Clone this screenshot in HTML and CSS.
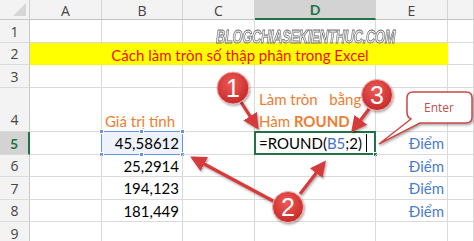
FILE: index.html
```html
<!DOCTYPE html>
<html lang="vi">
<head>
  <meta charset="UTF-8" />
  <title>Làm tròn số thập phân trong Excel</title>
  <link rel="stylesheet" href="styles.css">
</head>
<body>
  <div class="sheet">
    <div class="grid">
      <!-- header row -->
      <div class="corner"><span class="tri"></span></div>
      <div class="col-head">A</div>
      <div class="col-head">B</div>
      <div class="col-head">C</div>
      <div class="col-head active">D</div>
      <div class="col-head">E</div>
      <div class="col-head"></div>

      <!-- row 1 -->
      <div class="row-head">1</div>
      <div class="cell"></div><div class="cell"></div><div class="cell"></div><div class="cell"></div><div class="cell"></div><div class="cell"></div>

      <!-- row 2 -->
      <div class="row-head">2</div>
      <div class="cell title"><span>Cách làm tròn số thập phân trong Excel</span></div>
      <div class="cell"></div>

      <!-- row 3 -->
      <div class="row-head">3</div>
      <div class="cell"></div><div class="cell"></div><div class="cell"></div><div class="cell"></div><div class="cell"></div><div class="cell"></div>

      <!-- row 4 -->
      <div class="row-head tall">4</div>
      <div class="cell"></div>
      <div class="cell label">Giá trị tính</div>
      <div class="cell"></div>
      <div class="cell note">
        <span>Làm tròn&nbsp;&nbsp; bằng</span>
        <span>Hàm <b>ROUND</b></span>
      </div>
      <div class="cell"></div><div class="cell"></div>

      <!-- row 5 -->
      <div class="row-head active">5</div>
      <div class="cell"></div>
      <div class="cell num selected">45,58612
        <i class="h tl"></i><i class="h tr"></i><i class="h bl"></i><i class="h br"></i>
        <i class="h tm"></i><i class="h bm"></i>
      </div>
      <div class="cell"></div>
      <div class="cell editing">=ROUND(<span class="ref">B5</span>;2)<span class="caret"></span><i class="fill"></i></div>
      <div class="cell word">Điểm</div>
      <div class="cell"></div>

      <!-- row 6 -->
      <div class="row-head">6</div>
      <div class="cell"></div>
      <div class="cell num">25,2914</div>
      <div class="cell"></div><div class="cell"></div>
      <div class="cell word">Điểm</div>
      <div class="cell"></div>

      <!-- row 7 -->
      <div class="row-head">7</div>
      <div class="cell"></div>
      <div class="cell num">194,123</div>
      <div class="cell"></div><div class="cell"></div>
      <div class="cell word">Điểm</div>
      <div class="cell"></div>

      <!-- row 8 -->
      <div class="row-head">8</div>
      <div class="cell"></div>
      <div class="cell num">181,449</div>
      <div class="cell"></div><div class="cell"></div>
      <div class="cell word">Điểm</div>
      <div class="cell"></div>

      <!-- row 9 -->
      <div class="row-head">9</div>
      <div class="cell"></div><div class="cell"></div><div class="cell"></div><div class="cell"></div><div class="cell"></div><div class="cell"></div>
    </div>

    <div class="watermark">BLOGCHIASEKIENTHUC.COM</div>

    <svg class="marks" width="474" height="241" viewBox="0 0 474 241">
      <defs>
        <marker id="head" markerWidth="5" markerHeight="5" refX="4" refY="2.5" orient="auto" markerUnits="strokeWidth">
          <path d="M0,0 L5,2.5 L0,5 Z" fill="#d63a3a"/>
        </marker>
        <radialGradient id="ball" cx="45%" cy="35%" r="65%">
          <stop offset="0" stop-color="#ef5a55"/>
          <stop offset="1" stop-color="#c52a2a"/>
        </radialGradient>
        <filter id="shadow" x="-20%" y="-20%" width="150%" height="150%">
          <feDropShadow dx="1" dy="1.5" stdDeviation="1.2" flood-color="#000" flood-opacity="0.35"/>
        </filter>
      </defs>

      <g stroke="#d63a3a" stroke-width="3.2" fill="none" marker-end="url(#head)" filter="url(#shadow)">
        <line x1="241" y1="102" x2="257" y2="127"/>
        <line x1="369" y1="109" x2="353" y2="130"/>
        <line x1="275" y1="202" x2="193" y2="158"/>
        <line x1="300" y1="194" x2="324" y2="163"/>
      </g>

      <g filter="url(#shadow)">
        <path d="M413,92 H466 Q472,92 472,98 V117 Q472,123 466,123 H420 L379,144 L411,119 Q407,117 407,112 V98 Q407,92 413,92 Z" fill="#fff" stroke="#c94a48" stroke-width="1.5"/>
      </g>
      <text x="439" y="112" class="enter">Enter</text>

      <g filter="url(#shadow)">
        <circle cx="233" cy="88" r="16" fill="url(#ball)" stroke="#f1b0ae" stroke-width="1"/>
        <circle cx="377" cy="95" r="15.5" fill="url(#ball)" stroke="#f1b0ae" stroke-width="1"/>
        <circle cx="288" cy="207" r="15.5" fill="url(#ball)" stroke="#f1b0ae" stroke-width="1"/>
      </g>
      <text x="233" y="97" class="digit">1</text>
      <text x="377" y="104" class="digit">3</text>
      <text x="288" y="216" class="digit">2</text>
    </svg>
  </div>
</body>
</html>
```

FILE: styles.css
```css
* { margin: 0; padding: 0; box-sizing: border-box; }
body {
  font-family: Lato, 'Open Sans', sans-serif;
  background-color: #fff;
  color: #000;
  width: 474px;
  height: 241px;
  overflow: hidden;
}
.sheet {
  position: relative;
  width: 474px;
  height: 241px;
  overflow: hidden;
}
.grid {
  display: grid;
  grid-template-columns: 30px 72px 81px 72px 121px 72px 26px;
  grid-template-rows: 20px 23px 22px 23px 44px 23px 22px 23px 22px 23px;
}
.corner {
  background-color: #f3f3f3;
  border-right: 1px solid #d0d0d0;
  border-bottom: 1px solid #c8c8c8;
  position: relative;
}
.tri {
  position: absolute;
  right: 3px;
  bottom: 3px;
  width: 0;
  height: 0;
  border-left: 13px solid transparent;
  border-bottom: 13px solid #d6d6d6;
}
.col-head {
  background-color: #f3f3f3;
  border-right: 1px solid #d4d4d4;
  border-bottom: 1px solid #c0c0c0;
  display: flex;
  align-items: center;
  justify-content: center;
  font-size: 14px;
  color: #444;
  font-family: 'Open Sans', sans-serif;
  padding-top: 1px;
}
.col-head.active {
  background-color: #d3d3d3;
  border-bottom: 2px solid #217346;
  color: #217346;
  font-weight: bold;
  font-family: Lato, sans-serif;
}
.row-head {
  background-color: #f3f3f3;
  border-right: 1px solid #c8c8c8;
  border-bottom: 1px solid #dcdcdc;
  display: flex;
  align-items: center;
  justify-content: center;
  font-size: 14px;
  color: #444;
  font-family: 'Open Sans', sans-serif;
}
.row-head.tall {
  align-items: flex-end;
  padding-bottom: 2px;
}
.row-head.active {
  background-color: #d3d3d3;
  border-right: 2px solid #217346;
  color: #217346;
  font-weight: bold;
  font-family: Lato, sans-serif;
}
.cell {
  border-right: 1px solid #dadada;
  border-bottom: 1px solid #dadada;
  font-size: 15px;
  display: flex;
  align-items: center;
  position: relative;
  white-space: nowrap;
}
.title {
  grid-column: 2 / 7;
  background-color: #ffff00;
  border-right: none;
  border-bottom: none;
  color: #f01010;
  justify-content: center;
  font-size: 15px;
  line-height: 15px;
  padding-left: 2px;
  padding-top: 2px;
}
.label {
  color: #ee7d31;
  justify-content: center;
  align-items: flex-end;
  padding-bottom: 1px;
  padding-right: 4px;
}
.note {
  color: #ee7d31;
  flex-direction: column;
  align-items: flex-start;
  justify-content: center;
  padding-left: 4px;
  line-height: 22px;
}
.note b { font-weight: bold; }
.num {
  justify-content: flex-end;
  padding-right: 3px;
}
.selected {
  background-color: #eef2fb;
  border: 1px solid #6b93dc;
  margin: -1px 0 0 -1px;
}
.h {
  position: absolute;
  width: 5px;
  height: 5px;
  background-color: #6b93dc;
  border: 1px solid #fff;
}
.h.tl { left: -3px; top: -3px; }
.h.tr { right: -3px; top: -3px; }
.h.bl { left: -3px; bottom: -3px; }
.h.br { right: -3px; bottom: -3px; }
.h.tm { left: 37px; top: -3px; }
.h.bm { left: 37px; bottom: -3px; }
.editing {
  border: 2px solid #217346;
  margin: -1px 0 0 -1px;
  padding-left: 3px;
}
.ref { color: #4472c4; }
.caret {
  display: inline-block;
  width: 1px;
  height: 18px;
  background-color: #000;
  margin-left: 4px;
}
.fill {
  position: absolute;
  right: -4px;
  bottom: -4px;
  width: 5px;
  height: 5px;
  background-color: #217346;
  border: 1px solid #fff;
}
.word {
  color: #4a7cc9;
  justify-content: flex-end;
  padding-right: 3px;
}
.watermark {
  position: absolute;
  left: 216px;
  top: 28px;
  font-family: 'Liberation Sans', sans-serif;
  font-size: 19px;
  line-height: 17px;
  font-weight: bold;
  font-style: italic;
  letter-spacing: -0.5px;
  color: #e8e8e8;
  -webkit-text-stroke: 0.8px #6a6a6a;
  transform: scaleX(0.68);
  transform-origin: left top;
  white-space: nowrap;
}
.marks {
  position: absolute;
  left: 0;
  top: 0;
}
.digit {
  font-family: 'Liberation Sans', sans-serif;
  font-size: 25px;
  fill: #fff;
  text-anchor: middle;
}
.enter {
  font-family: 'Open Sans', sans-serif;
  font-size: 12px;
  fill: #c0504d;
  text-anchor: middle;
}
```
